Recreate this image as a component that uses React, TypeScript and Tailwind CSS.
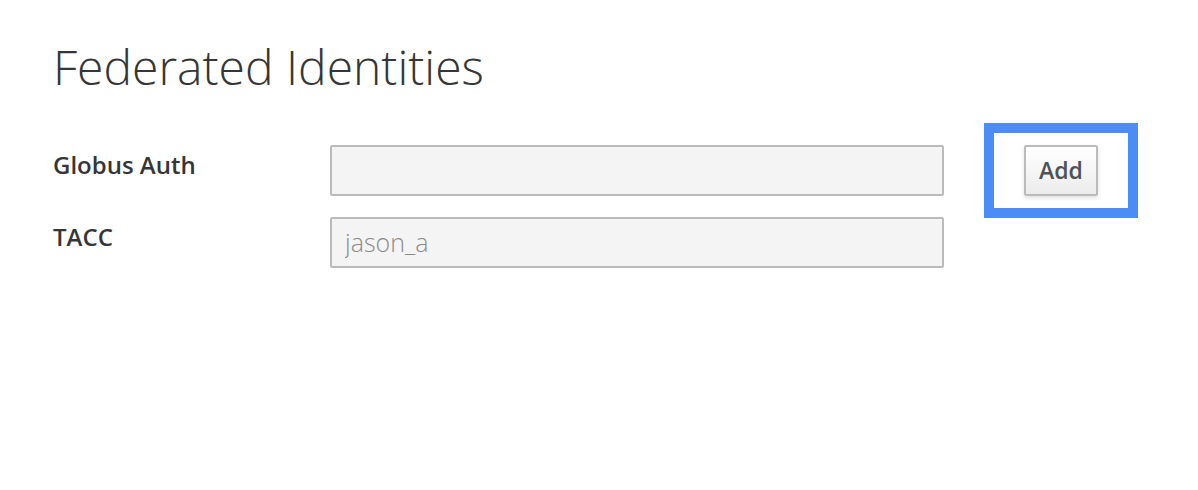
import React from "react";

const font = { fontFamily: '"Open Sans", "Liberation Sans", sans-serif' };

const FederatedIdentities = () => {
  return (
    <div className="min-h-[490px] w-full bg-white text-[#363636] pl-[53px] pt-[41px]" style={font}>
      <h1 className="text-[48px] font-light leading-[1.1] text-[#363636]">Federated Identities</h1>

      <div className="mt-[29px]">
        {/* Globus Auth row */}
        <div className="flex items-center">
          <label className="w-[277px] pb-[11px] text-[24px] font-semibold leading-normal text-[#363636]">Globus Auth</label>
          <input
            type="text"
            className="h-[51px] w-[614px] rounded-[2px] border-2 border-[#bbbbbb] bg-[#f4f4f4] px-[13px] text-[25px] text-[#8b8b8b] outline-none"
            readOnly
          />
          {/* highlighted button */}
          <div className="ml-[40px] flex h-[95px] w-[154px] items-center justify-center border-[10px] border-[#4d8bf5]">
            <button className="h-[51px] w-[74px] rounded-[2px] border-2 border-[#bbbbbb] bg-gradient-to-b from-white to-[#ececec] text-[23px] font-semibold text-[#4d5258] shadow-[0_2px_4px_rgba(0,0,0,0.12)]">
              Add
            </button>
          </div>
        </div>

        {/* TACC row */}
        <div className="-mt-px flex items-center">
          <label className="w-[277px] pb-[11px] text-[24px] font-semibold leading-normal text-[#363636]">TACC</label>
          <input
            type="text"
            value="jason_a"
            className="h-[51px] w-[614px] rounded-[2px] border-2 border-[#bbbbbb] bg-[#f4f4f4] px-[13px] text-[25px] font-light text-[#8b8b8b] outline-none"
            readOnly
          />
        </div>
      </div>
    </div>
  );
};

export default function App() {
  return <FederatedIdentities />;
}
